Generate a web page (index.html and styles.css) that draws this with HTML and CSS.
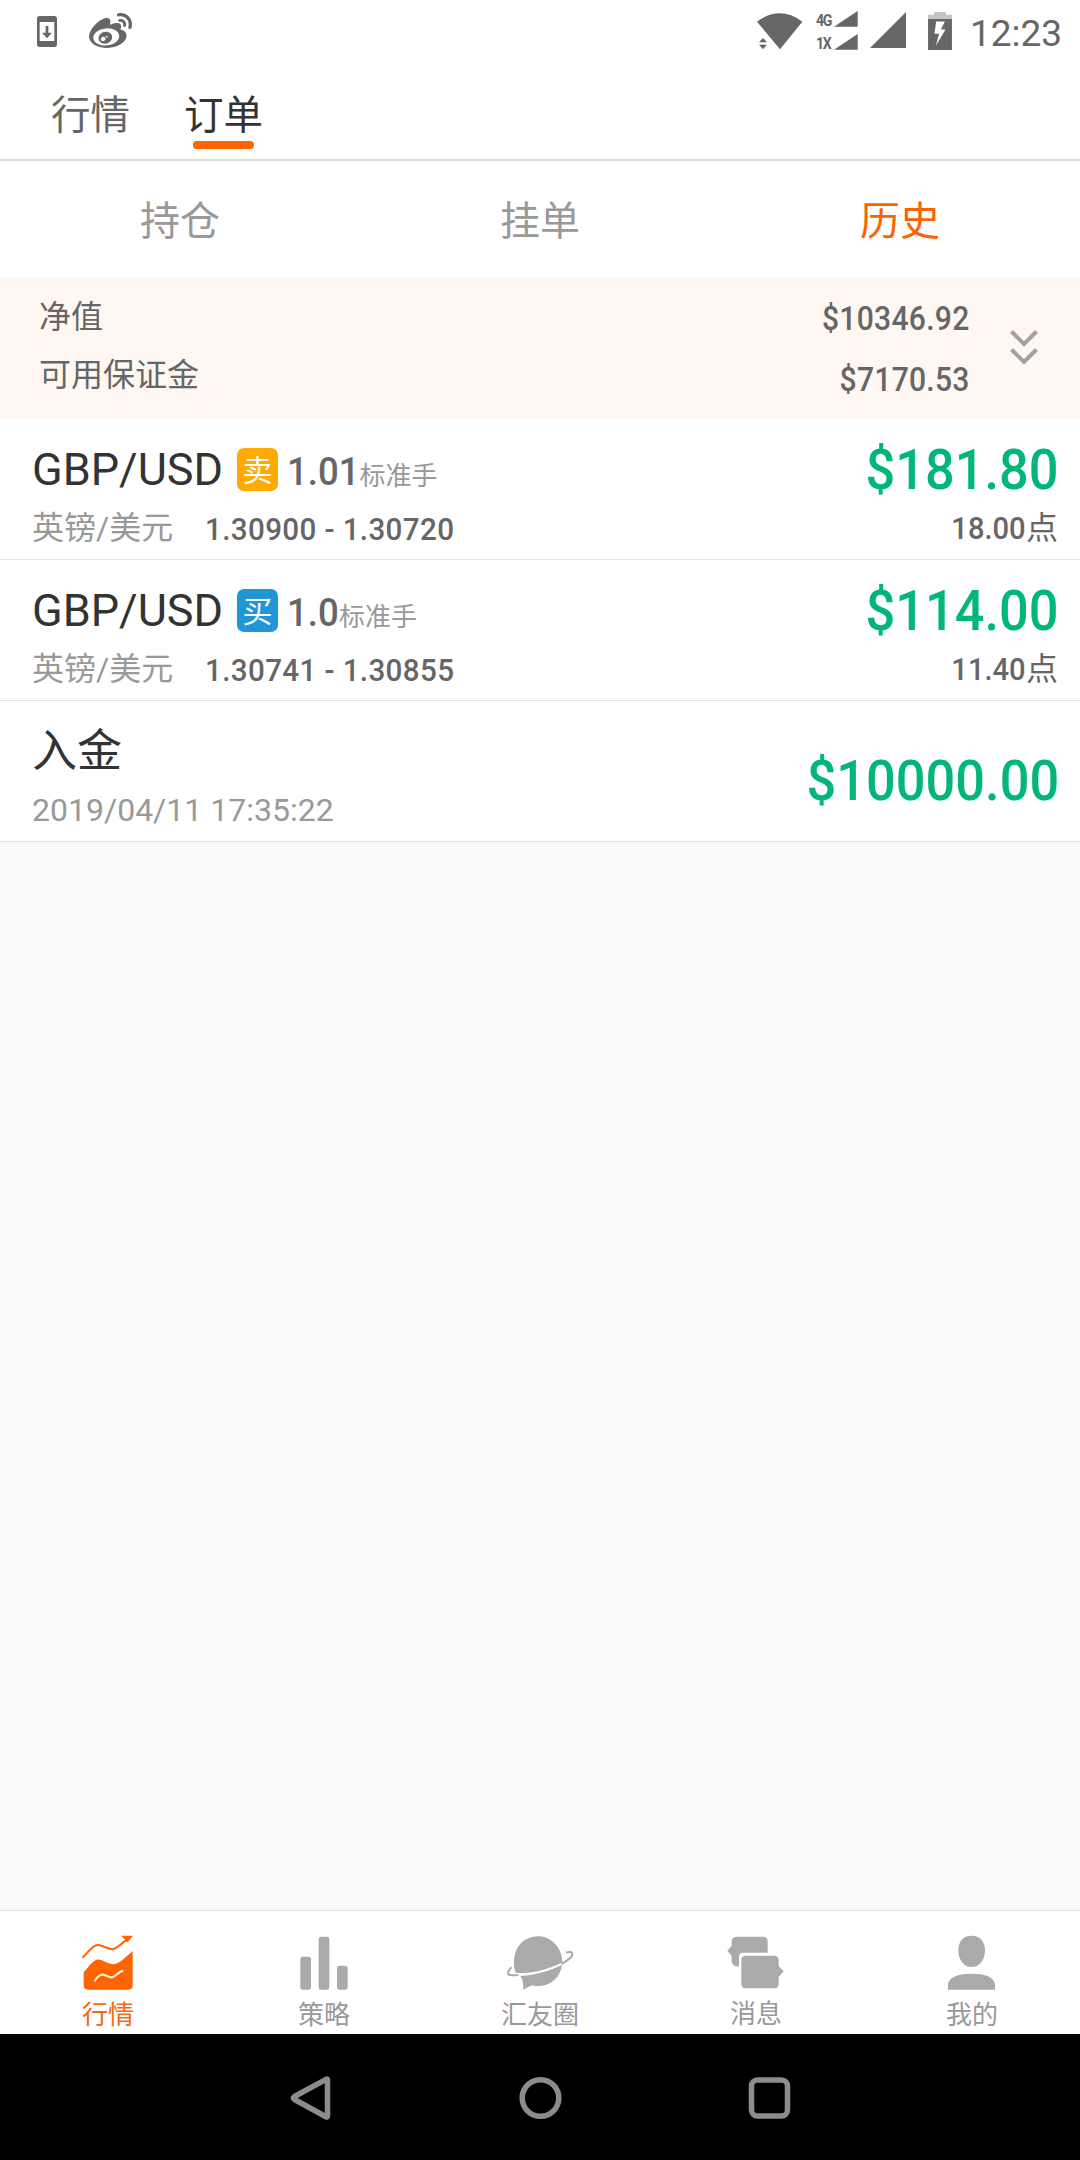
FILE: index.html
```html
<!DOCTYPE html>
<html lang="zh-CN">
<head>
<meta charset="utf-8">
<title>订单</title>
<link rel="stylesheet" href="styles.css">
</head>
<body>
<div class="screen">
  <div class="status">
    <svg class="status-update" viewBox="0 0 60 93"><path fill-rule="evenodd" d="M8 0H52Q60 0 60 8V85Q60 93 52 93H8Q0 93 0 85V8Q0 0 8 0ZM8 18V75H52V18ZM26 30H34V50H45L30 67L15 50H26Z"/></svg>
    <svg class="status-weibo" viewBox="0 2.2 24 19.6" preserveAspectRatio="none"><path d="M10.098 20.323c-3.977.391-7.414-1.406-7.672-4.02-.259-2.609 2.759-5.047 6.74-5.441 3.979-.394 7.413 1.404 7.671 4.018.259 2.6-2.759 5.049-6.737 5.439l-.002.004zM9.05 17.219c-.384.616-1.208.884-1.829.602-.612-.279-.793-.991-.406-1.593.379-.595 1.176-.861 1.793-.601.622.263.82.972.442 1.592zm1.27-1.627c-.141.237-.449.353-.689.253-.236-.09-.313-.361-.177-.586.138-.227.436-.346.672-.24.239.09.315.36.18.601l.014-.028zm.176-2.719c-1.893-.493-4.033.45-4.857 2.118-.836 1.704-.026 3.591 1.886 4.21 1.983.64 4.318-.341 5.132-2.179.8-1.793-.201-3.642-2.161-4.149zm7.563-1.224c-.346-.105-.57-.18-.405-.615.375-.977.42-1.804 0-2.404-.781-1.112-2.915-1.053-5.364-.03 0 0-.766.331-.571-.271.376-1.217.315-2.224-.27-2.809-1.338-1.337-4.869.045-7.888 3.08C1.309 10.87 0 13.273 0 15.348c0 3.981 5.099 6.395 10.086 6.395 6.536 0 10.888-3.801 10.888-6.82 0-1.822-1.547-2.854-2.915-3.284v.01zm1.908-5.092c-.766-.856-1.908-1.187-2.96-.962-.436.09-.706.511-.616.932.09.42.511.691.932.602.511-.105 1.067.044 1.442.465.376.421.466.977.316 1.473-.136.406.089.856.51.992.405.119.857-.105.992-.512.33-1.021.12-2.178-.646-3.035l.03.045zm2.418-2.195c-1.576-1.757-3.905-2.419-6.054-1.968-.496.104-.812.587-.706 1.081.104.496.586.813 1.082.707 1.532-.331 3.185.15 4.296 1.383 1.112 1.246 1.429 2.943.947 4.416-.165.48.106 1.007.586 1.157.479.165.991-.104 1.157-.586.675-2.088.241-4.478-1.338-6.235l.03.045z"/></svg>
    <svg class="status-wifi" viewBox="0 0 138 111"><path d="M0 26Q68 -24 136 26L69 109ZM18 75L30 88H6ZM6 95H30L18 109Z"/></svg>
    <div class="status-net">
      <div class="net-row"><span class="net-name">4G</span><svg viewBox="0 0 72 48"><path d="M0 47L71 0V47Z"/></svg></div>
      <div class="net-row"><span class="net-name">1X</span><svg viewBox="0 0 72 48"><path d="M0 47L71 0V47Z"/></svg></div>
    </div>
    <svg class="status-signal" viewBox="0 0 109 109"><path d="M0 109L109 0V109Z"/></svg>
    <svg class="status-battery" viewBox="0 0 71 113"><path fill="#c4c4c4" d="M18 0H53V8H71V22H0V8H18Z"/><path fill-rule="evenodd" d="M0 21H71V113H0ZM24 28L19 65H33L23 100L52 52H38L50 28Z"/></svg>
    <span class="status-time">12:23</span>
  </div>

  <div class="header">
    <span class="head-tab">行情</span>
    <span class="head-tab head-tab-on">订单</span>
  </div>

  <div class="subtabs">
    <span>持仓</span><span>挂单</span><span class="subtab-on">历史</span>
  </div>

  <div class="summary">
    <div class="summary-labels"><span>净值</span><span>可用保证金</span></div>
    <div class="summary-values"><span class="num">$10346.92</span><span class="num">$7170.53</span></div>
    <svg class="summary-more" viewBox="0 0 28 34"><path d="M1.5 1.5L14 14L26.500 1.500M1.500 19.500L14 32L26.500 19.500"/></svg>
  </div>

  <div class="row">
    <div class="row-left">
      <div class="line1"><span class="pair">GBP/USD</span><span class="badge sell">卖</span><span class="lots num lots-3">1.01</span><span class="unit">标准手</span></div>
      <div class="line2"><span class="pair-cn">英镑/美元</span><span class="price num">1.30900 - 1.30720</span></div>
    </div>
    <div class="row-right">
      <span class="amount num">$181.80</span>
      <span class="points"><span class="num">18.00</span>点</span>
    </div>
  </div>

  <div class="row">
    <div class="row-left">
      <div class="line1"><span class="pair">GBP/USD</span><span class="badge buy">买</span><span class="lots num lots-2">1.0</span><span class="unit">标准手</span></div>
      <div class="line2"><span class="pair-cn">英镑/美元</span><span class="price num">1.30741 - 1.30855</span></div>
    </div>
    <div class="row-right">
      <span class="amount num">$114.00</span>
      <span class="points"><span class="num">11.40</span>点</span>
    </div>
  </div>

  <div class="row">
    <div class="row-left">
      <div class="line1"><span class="pair">入金</span></div>
      <div class="line2"><span class="date">2019/04/11 17:35:22</span></div>
    </div>
    <div class="row-right deposit"><span class="amount num">$10000.00</span></div>
  </div>

  <div class="empty"></div>

  <div class="tabbar">
    <div class="tab tab-on">
      <svg width="52" height="56" viewBox="2 -1 156 168"><path fill="none" stroke="currentColor" stroke-width="6" d="M3 70C20 54 33 34 48 32S80 48 96 44S125 24 139 13"/><path d="M120 4H155L140 22Q133 25 131 16ZM154 50V153Q154 166 141 166H20Q7 166 7 153V114C20 100 32 80 46 76C62 73 80 91 98 90C118 86 134 67 154 50Z"/><path fill="none" stroke="#fff3e6" stroke-width="6" d="M39 141C46 131 55 119 66 121S83 131 93 129C104 127 112 110 126 109"/></svg>
      <span>行情</span>
    </div>
    <div class="tab">
      <svg width="48" height="56" viewBox="0 -1 144 168"><rect x="1" y="67" width="32" height="99" rx="8"/><rect x="56" y="7" width="32" height="159" rx="8"/><rect x="111" y="94" width="32" height="72" rx="8"/></svg>
      <span>策略</span>
    </div>
    <div class="tab">
      <svg width="68" height="56" viewBox="3 -1 204 168"><path d="M32 115C23 94 26 59 37 41C52 17 75 5 103 6C142 9 172 43 172 84C130 105 84 120 32 115ZM46 125C94 122 134 109 171 92C166 128 139 154 104 155C94 156 86 154 80 153L54 166Q58 142 46 125Z"/><path fill="none" stroke="currentColor" stroke-width="6" d="M20 99C9 108 4 121 16 122C24 124 33 123 40 122M169 89C187 80 203 67 202 59C202 52 193 51 183 55"/></svg>
      <span>汇友圈</span>
    </div>
    <div class="tab tab-msg">
      <svg width="58" height="56" viewBox="0 -2 174 168"><path d="M30 6H108Q122 6 122 20V54H48Q36 54 36 66V95Q15 97 14 80V63L1 48L14 34V20Q14 6 30 6Z"/><path d="M57 63H141Q155 63 155 77V94L170 110L155 127V147Q155 161 141 161H57Q43 161 43 147V77Q43 63 57 63Z"/></svg>
      <span>消息</span>
    </div>
    <div class="tab">
      <svg width="48" height="56" viewBox="1 -1 144 168"><path d="M72 4C101 4 113 26 112 52C110 79 94 98 72 98S34 79 32 52C31 26 43 4 72 4ZM1 166V149C5 126 35 118 72 118S138 126 142 149V166Z"/></svg>
      <span>我的</span>
    </div>
  </div>

  <div class="sysnav">
    <svg width="44" height="44" viewBox="0 0 44 44"><path d="M38.500 4V40Q38.500 41.500 37 40.700L5.500 23.500Q3 22 5.500 20.500L37 3.300Q38.500 2.500 38.500 4Z"/></svg>
    <svg width="44" height="44" viewBox="0 0 44 44"><circle cx="22.500" cy="22" r="18.300"/></svg>
    <svg width="44" height="44" viewBox="0 0 44 44"><rect x="4.500" y="4" width="36" height="36" rx="6"/></svg>
  </div>
</div>
</body>
</html>
```
FILE: styles.css
```css
* { box-sizing: border-box; }
body { margin: 0; background: #fff; font-family: Roboto, "Noto Sans CJK SC", sans-serif; color: #666; }
svg { display: block; flex: none; fill: currentColor; }
.screen { display: flex; flex-direction: column; width: 1080px; height: 2160px; }

/* condensed numerals */
.num { display: inline-block; font-weight: 500; transform: scaleX(.925); transform-origin: right; white-space: nowrap; }

.status { display: flex; align-items: flex-start; height: 64px; padding-left: 37px; }
.status-update { width: 20px; height: 31px; margin-top: 16px; }
.status-weibo { width: 43px; height: 35px; margin: 13px 0 0 32px; }
.status-wifi { width: 46px; height: 37px; margin: 13px 0 0 625px; }
.status-net { display: flex; flex-direction: column; gap: 7px; margin: 11px 0 0 13px; }
.net-row { display: flex; align-items: flex-end; height: 16px; }
.net-row svg { width: 24px; height: 16px; }
.net-name { width: 18px; font: bold 16px/12px Roboto, sans-serif; letter-spacing: -1.5px; transform: scaleX(.88); transform-origin: left; }
.status-signal { width: 36px; height: 36px; margin: 12px 0 0 12px; }
.status-battery { width: 24px; height: 38px; margin: 12px 0 0 22px; }
.status-time { margin: 12px 0 0 18px; font-size: 37px; line-height: 43px; }

.header { display: flex; gap: 53px; height: 97px; padding-left: 51px; border-bottom: 2px solid #dcdbe0; font-size: 39.500px; }
.head-tab { width: 80px; padding-top: 21px; line-height: 61px; }
.head-tab-on { color: #333; }
.head-tab-on::after { content: ""; display: block; width: 61px; height: 8px; margin: -5px 0 0 9px; border-radius: 4px; background: #ff6400; }

.subtabs { display: grid; grid-template-columns: repeat(3, 1fr); height: 116px; font-size: 40px; line-height: 122px; text-align: center; color: #999; }
.subtab-on { color: #fa6400; }

.summary { display: flex; height: 142px; padding: 16px 42px 0 39px; background: #fff8f2; font-size: 32px; }
.summary-labels, .summary-values { display: flex; flex-direction: column; }
.summary-labels { line-height: 58px; margin-top: -5px; }
.summary-values { flex: 1; align-items: flex-end; font-size: 32.500px; line-height: 61px; letter-spacing: .3px; margin-top: -4px; }
.summary-more { width: 28px; height: 34px; margin: 37px 0 0 40px; fill: none; stroke: #a3a1a0; stroke-width: 4px; }

.row { display: flex; justify-content: space-between; height: 141px; padding: 19px 21px 0 32px; border-bottom: 1px solid #e3e3e3; }
.row-left { padding-top: 6px; }
.line1 { display: flex; height: 52px; line-height: 52px; }
.line2 { display: flex; height: 40px; margin-top: 12px; font-size: 32px; line-height: 40px; color: #999; }
.pair { font-size: 45px; color: #333; }
.badge { width: 41px; height: 43px; margin: 4px 0 0 14px; border-radius: 7px; color: #fff; font-size: 30px; line-height: 46px; text-align: center; }
.sell { background: #ffaa00; }
.buy { background: #2196d6; }
.lots { margin-left: 9px; font-size: 39.500px; line-height: 55px; transform-origin: left; }
.lots-3 { margin-right: -6px; }
.lots-2 { margin-right: -4px; }
.unit { font-size: 26px; line-height: 64px; color: #999; }
.price { margin: 1px 0 0 32px; color: #666; letter-spacing: .4px; transform-origin: left; }
.row-right { display: flex; flex-direction: column; align-items: flex-end; }
.amount { font-size: 56px; line-height: 64px; color: #00b679; transform: scaleX(.935); }
.points { margin: 6px 1px 0 0; font-size: 32px; line-height: 40px; }
.points .num { transform: scaleX(.91); }
.deposit { padding-top: 29px; }

.empty { flex: 1; background: #fafafa; }

.tabbar { display: grid; grid-template-columns: repeat(5, 1fr); height: 124px; border-top: 1px solid #e3e3e3; background: #fff; }
.tab { display: flex; flex-direction: column; align-items: center; padding-top: 23px; font-size: 26px; line-height: 40px; color: #999; }
.tab svg { color: #aaa; }
.tab span { margin-top: 5px; }
.tab.tab-on { color: #f26a15; }
.tab.tab-on svg { color: #ff6400; }
.tab-msg span { margin-top: 4px; }

.sysnav { display: flex; justify-content: center; gap: 185px; height: 126px; padding-top: 42px; background: #000; }
.sysnav svg { fill: none; stroke: #8c8c8c; stroke-width: 5.500px; }
```
